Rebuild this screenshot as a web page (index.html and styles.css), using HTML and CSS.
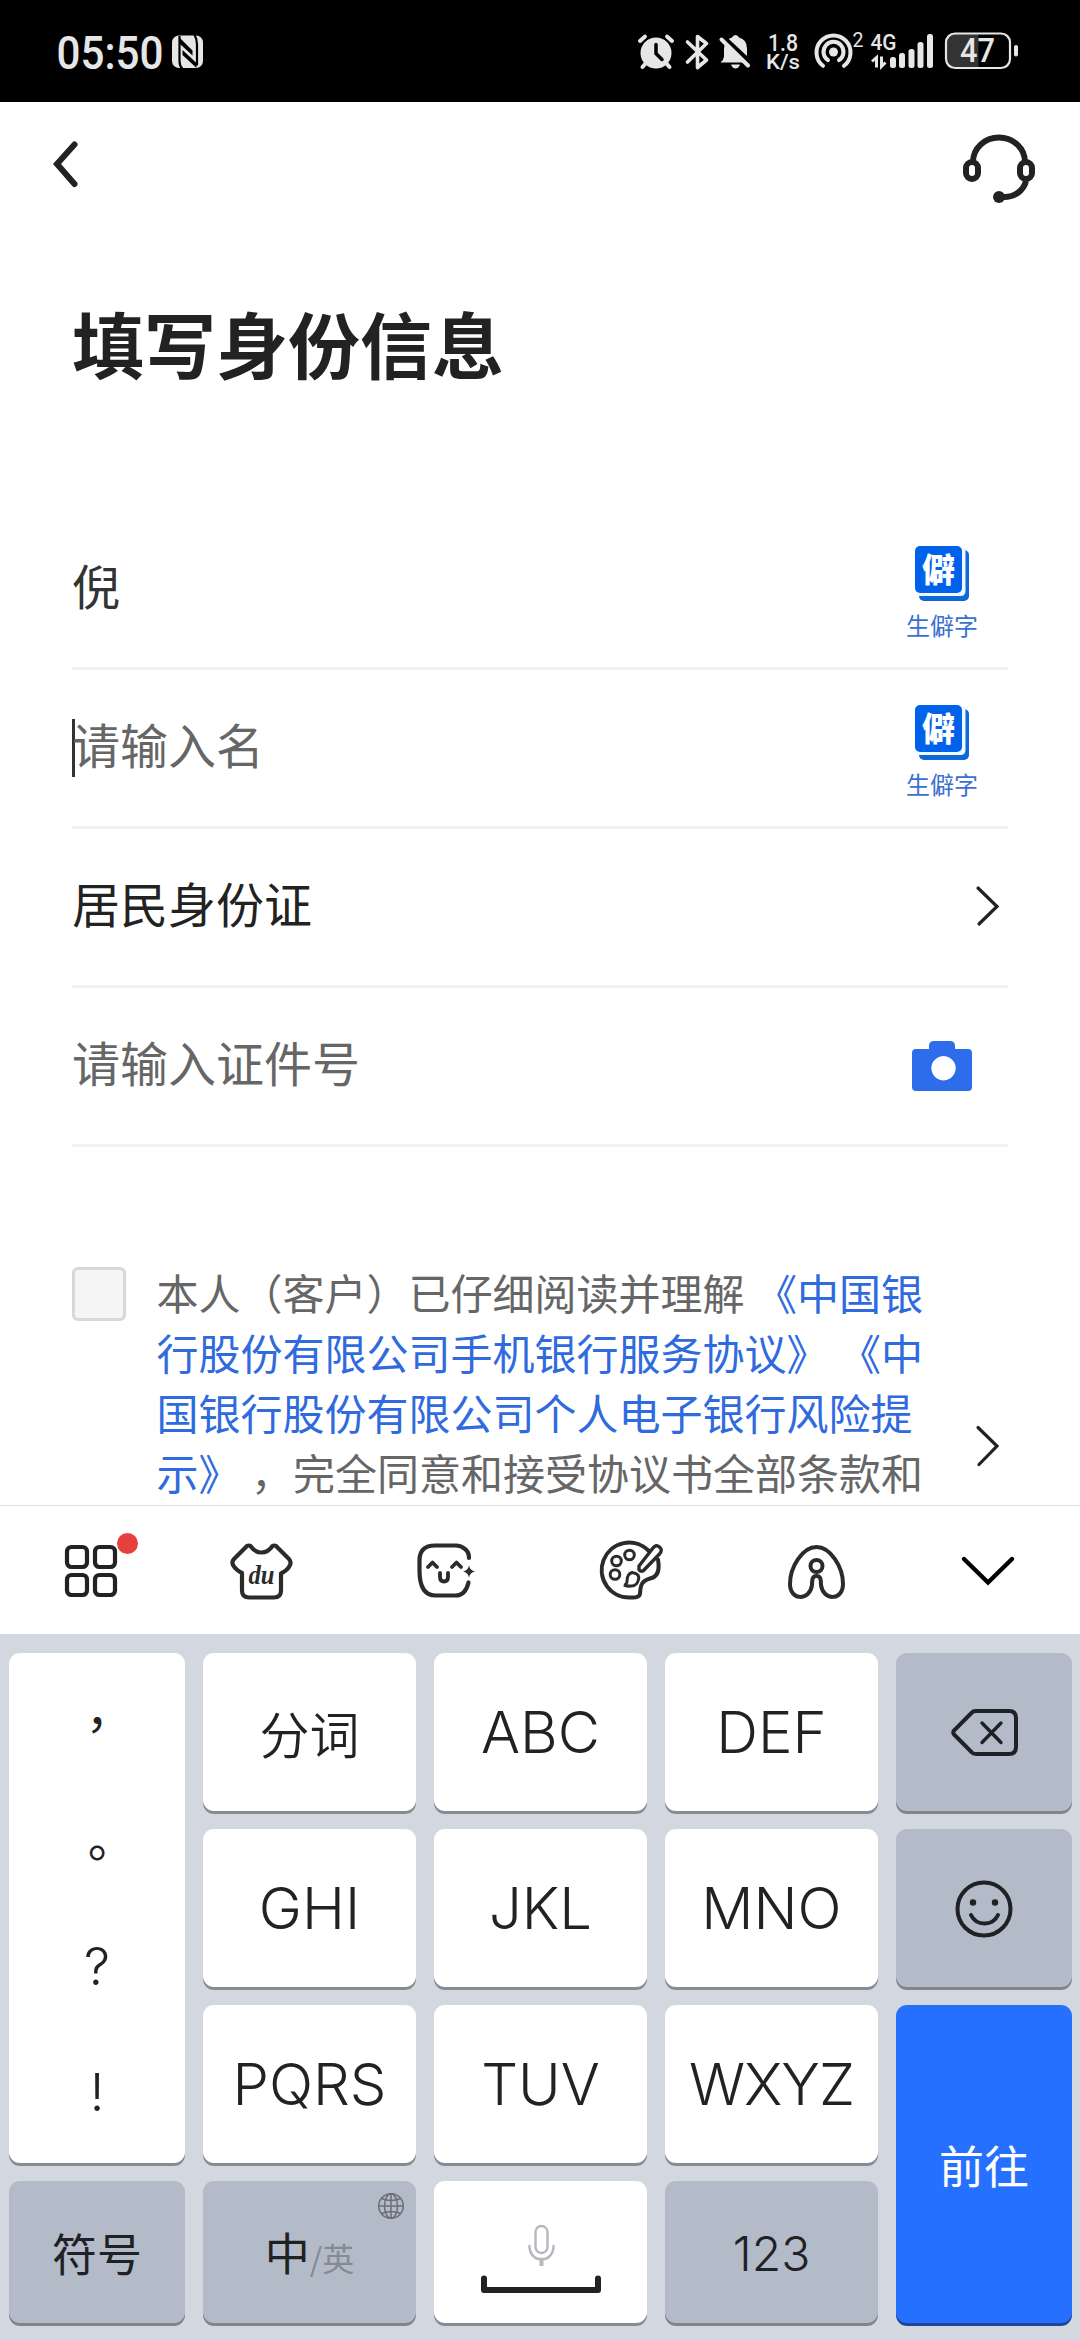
FILE: index.html
```html
<!DOCTYPE html>
<html lang="zh-CN">
<head>
<meta charset="utf-8">
<title>填写身份信息</title>
<link rel="stylesheet" href="styles.css">
</head>
<body>
<div class="screen">
  <header class="status">
    <svg class="status-left" width="160" height="102" viewBox="50 0 160 102">
      <text class="st" x="56.500" y="68.500" font-size="46" textLength="107" lengthAdjust="spacingAndGlyphs">05:50</text>
      <rect x="172" y="35.500" width="31" height="32.500" rx="7" fill="#e6e6e6"/>
      <path d="M179.500 36v25q0 5 3 8M194.500 34.500q2.500 5 2.500 10v21" fill="none" stroke="#000" stroke-width="2.200"/>
      <path d="M180 38l12.500 12.500v5L180 44zM182.500 50l14 13v5L182.500 55z" fill="#000"/>
    </svg>
    <div class="status-right">
      <svg width="48" height="102" viewBox="632 0 48 102">
        <circle cx="656" cy="53" r="15.500" fill="#e6e6e6"/>
        <path d="M640 41l5-4.500M672 41l-5-4.500M646 63l-3.500 4M666 63l3.500 4" stroke="#e6e6e6" stroke-width="4" stroke-linecap="round"/>
        <path d="M656 44.500v9l6 6" fill="none" stroke="#000" stroke-width="3.500" stroke-linecap="round"/>
      </svg>
      <svg width="34" height="102" viewBox="680 0 34 102">
        <path d="M687.500 42l19 18-9 7.500V36.500l9 7-19 18.500" fill="none" stroke="#e6e6e6" stroke-width="3.600" stroke-linejoin="round" stroke-linecap="round"/>
      </svg>
      <svg width="46" height="102" viewBox="714 0 46 102">
        <path d="M720.500 62.500q3-2 3.500-6v-8q0-9 8-11 1-2.500 3.500-2.500t3.500 2.500q8 2 8 11v8q0 4 2 6z" fill="#e6e6e6"/>
        <path d="M731 64.500h9q-1.500 4-4.500 4t-4.500-4z" fill="#e6e6e6"/>
        <path d="M723 37l29 27" stroke="#000" stroke-width="5"/>
        <path d="M721.500 39.500l26.500 26" stroke="#e6e6e6" stroke-width="4" stroke-linecap="round"/>
      </svg>
      <svg width="48" height="102" viewBox="760 0 48 102">
        <text class="st" x="768" y="50.500" font-size="23" textLength="30" lengthAdjust="spacingAndGlyphs">1.8</text>
        <text class="st" x="766" y="69" font-size="21" textLength="34" lengthAdjust="spacingAndGlyphs">K/s</text>
      </svg>
      <svg width="60" height="102" viewBox="808 0 60 102">
        <circle cx="833.500" cy="52" r="4.500" fill="#e6e6e6"/>
        <path d="M828 60.200a10 10 0 1 1 11 0M823 65.800a17 17 0 1 1 21 0" fill="none" stroke="#e6e6e6" stroke-width="4" stroke-linecap="round"/>
        <text class="st thin" x="852.500" y="47" font-size="20" textLength="11" lengthAdjust="spacingAndGlyphs">2</text>
      </svg>
      <svg width="72" height="102" viewBox="868 0 72 102">
        <text class="st" x="870.500" y="50" font-size="22.500" textLength="26" lengthAdjust="spacingAndGlyphs">4G</text>
        <path d="M872 61.500l4.500-4v10M881.500 56.500v10l4-4" fill="none" stroke="#e6e6e6" stroke-width="3"/>
        <g fill="#e6e6e6"><rect x="890" y="57" width="6" height="11" rx="2.500"/><rect x="899" y="53" width="6" height="15" rx="2.500"/><rect x="908.500" y="49" width="6" height="19" rx="2.500"/><rect x="917.500" y="42" width="6" height="26" rx="2.500"/><rect x="927" y="34" width="6" height="34" rx="2.500"/></g>
      </svg>
      <svg width="140" height="102" viewBox="940 0 140 102">
        <path d="M978.500 34H955q-9 0-9 9v15.500q0 9 9 9h23.500z" fill="#333"/>
        <rect x="946" y="33.500" width="64" height="34.500" rx="9" fill="none" stroke="#e6e6e6" stroke-width="2.200"/>
        <rect x="1014" y="45" width="4" height="11.500" rx="2" fill="#e6e6e6"/>
        <text class="st" x="960" y="62" font-size="33" textLength="35" lengthAdjust="spacingAndGlyphs">47</text>
      </svg>
    </div>
  </header>

  <main class="page">
    <nav class="nav">
      <svg width="28" height="50" viewBox="51 139 28 50"><path d="M74.500 144.500L57 164l17.500 20" fill="none" stroke="#222" stroke-width="6" stroke-linecap="round"/></svg>
      <svg width="76" height="72" viewBox="961 133 76 72" fill="none" stroke="#222" stroke-width="6">
        <path d="M973 162a26 24.500 0 0 1 52 0M1026 181c-2.500 10-12 16.500-23 16"/>
        <rect x="966" y="162" width="12" height="17" rx="6"/><rect x="1020" y="162" width="12" height="17" rx="6"/>
        <circle cx="999" cy="197" r="6" fill="#222" stroke="none"/>
      </svg>
    </nav>
    <h1 class="title">填写身份信息</h1>

    <form class="form">
      <div class="row">
        <span class="value typed">倪</span>
        <div class="rare">
          <svg width="54" height="55" viewBox="0 0 54 55"><rect x="4" y="4" width="50" height="51" rx="5" fill="#0f68d8"/><path d="M2 2h48.500v43q0 5-5 5H2z" fill="#eef9ff"/><rect width="47" height="47" rx="5" fill="#0062ea"/><text x="23.500" y="36" text-anchor="middle" class="rare-glyph">僻</text></svg>
          <span class="rare-label">生僻字</span>
        </div>
      </div>
      <div class="row">
        <span class="value hint focused">请输入名</span>
        <div class="rare">
          <svg width="54" height="55" viewBox="0 0 54 55"><rect x="4" y="4" width="50" height="51" rx="5" fill="#0f68d8"/><path d="M2 2h48.500v43q0 5-5 5H2z" fill="#eef9ff"/><rect width="47" height="47" rx="5" fill="#0062ea"/><text x="23.500" y="36" text-anchor="middle" class="rare-glyph">僻</text></svg>
          <span class="rare-label">生僻字</span>
        </div>
      </div>
      <div class="row">
        <span class="value">居民身份证</span>
        <svg class="arrow" width="26" height="42" viewBox="0 0 26 42"><path d="M3 3l19 18.500L4 39" fill="none" stroke="#222" stroke-width="3.200" stroke-linecap="round"/></svg>
      </div>
      <div class="row">
        <span class="value hint">请输入证件号</span>
        <svg class="camera" width="60" height="50" viewBox="0 0 60 50"><path fill="#2d6dec" fill-rule="evenodd" d="M4 8h13V5q0-5 5-5h16q5 0 5 5v3h13q4 0 4 4v34q0 4-4 4H4q-4 0-4-4V12q0-4 4-4zM31.500 15a12.200 12.200 0 1 0 .01 0z"/></svg>
      </div>
    </form>

    <section class="agree">
      <span class="box"></span>
      <p class="terms">本人（客户）已仔细阅读并理解 <a>《中国银<br>行股份有限公司手机银行服务协议》 《中<br>国银行股份有限公司个人电子银行风险提<br>示》</a> ，完全同意和接受协议书全部条款和</p>
      <svg class="agree-arrow" width="26" height="42" viewBox="0 0 26 42"><path d="M3 2.500l19 18.500L4 39.500" fill="none" stroke="#222" stroke-width="3.200" stroke-linecap="round"/></svg>
    </section>
  </main>

  <div class="toolbar">
    <svg width="182" height="128" viewBox="0 1506 182 128">
      <g fill="none" stroke="#222" stroke-width="4.200"><rect x="67" y="1547" width="20" height="20" rx="4.500"/><rect x="95" y="1547" width="20" height="20" rx="4.500"/><rect x="67" y="1575" width="20" height="20" rx="4.500"/><rect x="95" y="1575" width="20" height="20" rx="4.500"/></g>
      <circle cx="127.500" cy="1543.500" r="10.500" fill="#e8403c"/>
    </svg>
    <svg width="173" height="128" viewBox="182 1506 173 128">
      <path d="M242 1573c-4-2-7-4.500-9-8q-1.500-3.500 1-6l13-13q2-1 3.500 0 4.500 6.500 11 6.500t11-6.500q1.500-1 3.500 0l13 13q2.500 3 1 6-2 5-9 8.500v17q0 7-7 7h-25q-7 0-7-7z" fill="none" stroke="#2b2b2b" stroke-width="4.200" stroke-linejoin="round"/>
      <text x="261.500" y="1584" text-anchor="middle" class="du" textLength="26" lengthAdjust="spacingAndGlyphs">du</text>
    </svg>
    <svg width="185" height="128" viewBox="355 1506 185 128" fill="none" stroke="#2b2b2b" stroke-width="4.200">
      <path d="M469 1558q0-6-4-9-4-3.500-9-3.500h-21q-15.500 0-15.500 15v10q0 25 16 25h20q10 0 13-13" stroke-linecap="round"/>
      <path d="M428 1567l4.500-4.500 4.500 4.500M452 1567l4.500-4.500 4.500 4.500M440 1573v4q0 4.500 4 4.500t4-4.500v-4" stroke-width="3.800" stroke-linecap="round" stroke-linejoin="round"/>
      <path d="M469 1565.500q1 5 6 6-5 1-6 6-1-5-6-6 5-1 6-6z" fill="#2b2b2b" stroke="none"/>
    </svg>
    <svg width="184" height="128" viewBox="540 1506 184 128" fill="none" stroke="#2b2b2b" stroke-width="4">
      <path d="M649 1551a27.500 27.500 0 1 0-18 46.500q8 .5 9-3.500c.5-10 2-13 10-15.500q11-2 8-19" stroke-linecap="round"/>
      <path d="M639 1566l14-18q3-4 6.500-1t0 7l-16.500 17q-3 1-4-1.500z" stroke-width="3.400" stroke-linejoin="round"/>
      <circle cx="616.500" cy="1561" r="4.800" stroke-width="3"/><circle cx="629.500" cy="1555" r="4.800" stroke-width="3"/><circle cx="615" cy="1574.500" r="4.800" stroke-width="3"/>
      <path d="M624 1585q3 0 3-4 0-7 5-8.500 8 1 6.500 7-1.500 6.500-7 6.500-4 .5-7.500-1z" stroke-width="3"/>
    </svg>
    <svg width="178" height="128" viewBox="724 1506 178 128" fill="none" stroke="#2b2b2b" stroke-width="4">
      <path d="M816.500 1547c-14 0-26.500 20-26.500 37 0 17 20 17 22 1 0-7 1-9 4.500-9s4.500 2 4.500 9c2 16 22 16 22-1 0-17-12.500-37-26.500-37z"/>
      <circle cx="816.500" cy="1566" r="6"/>
    </svg>
    <svg width="178" height="128" viewBox="902 1506 178 128"><path d="M964 1559l24 23.500 24-23.500" fill="none" stroke="#000" stroke-width="4.400" stroke-linecap="round"/></svg>
  </div>

  <div class="keyboard">
    <div class="key punct"><span class="comma">，</span><span class="stop">。</span><span class="latin ask">?</span><span class="latin bang">!</span></div>
    <div class="key seg">分词</div>
    <div class="key">ABC</div>
    <div class="key">DEF</div>
    <div class="key fn"><svg width="68" height="52" viewBox="-1 -1 68 52" fill="none" stroke="#1f2224" stroke-width="4"><path d="M25 4h33q7 0 7 7v29q0 7-7 7H25q-3 0-4-1.500L3 27.500q-1.500-2 0-4L21 5.500Q22 4 25 4z"/><path d="M31 16l19 19.500M50 16L31 35.500" stroke-width="3.400" stroke-linecap="round"/></svg></div>
    <div class="key">GHI</div>
    <div class="key">JKL</div>
    <div class="key">MNO</div>
    <div class="key fn"><svg width="60" height="60" viewBox="0 -1 60 60"><circle cx="30" cy="30" r="26.500" fill="none" stroke="#1f2224" stroke-width="4"/><circle cx="19" cy="23.500" r="3.200" fill="#1f2224"/><circle cx="41" cy="23.500" r="3.200" fill="#1f2224"/><path d="M17 36q4 8.500 13.500 8.500T44 36" fill="none" stroke="#1f2224" stroke-width="4" stroke-linecap="round"/></svg></div>
    <div class="key">PQRS</div>
    <div class="key">TUV</div>
    <div class="key tight">WXYZ</div>
    <div class="key go">前往</div>
    <div class="key fn cjk">符号</div>
    <div class="key fn cjk lang">中<small>/英</small>
      <svg class="globe" width="28" height="28" viewBox="0 0 28 28" fill="none" stroke="#6a6f77" stroke-width="1.500"><circle cx="14" cy="14" r="12.300"/><ellipse cx="14" cy="14" rx="6.500" ry="12.300"/><path d="M14 1.700v24.600M1.700 14h24.600M4.500 6.500q9.500 4 19 0M4.500 21.500q9.500-4 19 0"/></svg>
    </div>
    <div class="key space"><svg width="124" height="142" viewBox="478 2181 124 142" fill="none"><rect x="534.500" y="2226" width="12" height="27" rx="6" stroke="#b4b8bf" stroke-width="2.400"/><path d="M528.500 2246v2q1.500 9 8.500 11h7q7-2 8.500-11v-2" stroke="#b4b8bf" stroke-width="2.400" stroke-linecap="round"/><path d="M540.500 2259v7" stroke="#b4b8bf" stroke-width="4"/><path d="M483 2278.500v11.500h114v-11.500" stroke="#222" stroke-width="6" stroke-linecap="round" stroke-linejoin="round"/></svg></div>
    <div class="key fn num">123</div>
  </div>
</div>
</body>
</html>
```
FILE: styles.css
```css
* { box-sizing: border-box; }
body { margin: 0; background: #fff; font-family: Roboto, "Noto Sans CJK SC", sans-serif; color: #222; }
svg { display: block; flex: none; overflow: visible; }
.screen { width: 1080px; height: 2340px; display: flex; flex-direction: column; overflow: hidden; }

.status { height: 102px; flex: none; background: #000; display: flex; justify-content: space-between; padding-left: 50px; }
.status-right { display: flex; }
.st { font-family: Roboto, sans-serif; font-weight: 500; fill: #e6e6e6; }
.st.thin { font-weight: 400; }

.page { height: 1403px; flex: none; overflow: hidden; }
.nav { display: flex; justify-content: space-between; align-items: flex-start; padding: 31px 43px 0 51px; height: 202px; }
.nav svg:first-child { margin-top: 6px; }
.title { margin: 0; padding-left: 72px; height: 207px; font-size: 72px; line-height: 90px; font-weight: 700; }

.form { padding: 0 72px; }
.row { height: 159px; border-bottom: 3px solid #f2f2f2; display: flex; justify-content: space-between; align-items: center; }
.value { font-size: 48px; line-height: 58px; margin-top: -1px; }
.typed { color: #333; }
.hint { color: #666; }
.focused { box-shadow: inset 3px 0 #333; }
.rare { width: 72px; margin: 9px 30px 0 0; height: 97px; display: flex; flex-direction: column; align-items: center; }
.rare svg { margin-top: 1px; }
.rare-glyph { font-family: "Noto Sans CJK SC", sans-serif; font-weight: 900; font-size: 33px; fill: #fff; }
.rare-label { font-size: 24px; line-height: 28px; margin-top: 12px; color: #3a70d2; white-space: nowrap; }
.arrow { margin: -3px 7px 0 0; }
.camera { margin: 0 36px 0 0; }

.agree { display: flex; align-items: flex-start; padding: 120px 79px 0 72px; }
.box { flex: none; width: 54px; height: 54px; border: 3px solid #d8d8da; border-radius: 6px; background: #f5f5f6; }
.terms { margin: -1px 0 0 30.500px; flex: 1; font-size: 42px; line-height: 60px; color: #666; white-space: nowrap; }
.terms a { color: #2f6ade; }
.agree-arrow { margin-top: 158px; }

.toolbar { flex: none; height: 129px; border-top: 1px solid #dedfe0; display: flex; }
.du { font-family: "Liberation Serif", serif; font-style: italic; font-weight: 700; font-size: 28px; fill: #2b2b2b; }

.keyboard { flex: 1; background: #d3d8e0; padding: 19px 8px 17px 9px; display: grid; grid-template-columns: 176px 213px 213px 213px 176px; grid-template-rows: 158px 158px 158px 142px; gap: 18px; }
.key { background: #fff; border-radius: 11px; box-shadow: 0 3px 0 #868a91; display: flex; align-items: center; justify-content: center; font-family: Inter, "Noto Sans CJK SC", sans-serif; font-weight: 350; font-size: 58px; line-height: 1; color: #222; }
.tight { letter-spacing: -1px; }
.fn { background: #b3bbc8; box-shadow: 0 3px 0 #7f858e; color: #1f2224; }
.seg, .cjk, .go { font-family: "Noto Sans CJK SC", sans-serif; font-weight: 400; }
.seg { font-size: 50px; font-weight: 350; }
.cjk, .go { font-size: 45px; }
.num { font-size: 48px; padding-top: 3px; }
.go { grid-column: 5; grid-row: 3 / 5; background: #2670ff; box-shadow: 0 3px 0 #1f4799; color: #fff; }
.punct { grid-row: 1 / 4; flex-direction: column; justify-content: flex-start; font-family: "Noto Sans CJK TC", sans-serif; font-weight: 400; font-size: 48px; }
.punct .latin { font-family: Inter, sans-serif; font-weight: 350; font-size: 52px; }
.punct .comma { line-height: 136px; }
.punct .stop { line-height: 122px; }
.punct .ask { line-height: 112px; }
.punct .bang { line-height: 106px; margin-top: 17px; }
.lang { position: relative; align-items: baseline; line-height: 142px; }
.lang small { font-size: 32px; color: #868b93; }
.globe { position: absolute; top: 11px; right: 11px; }
```
